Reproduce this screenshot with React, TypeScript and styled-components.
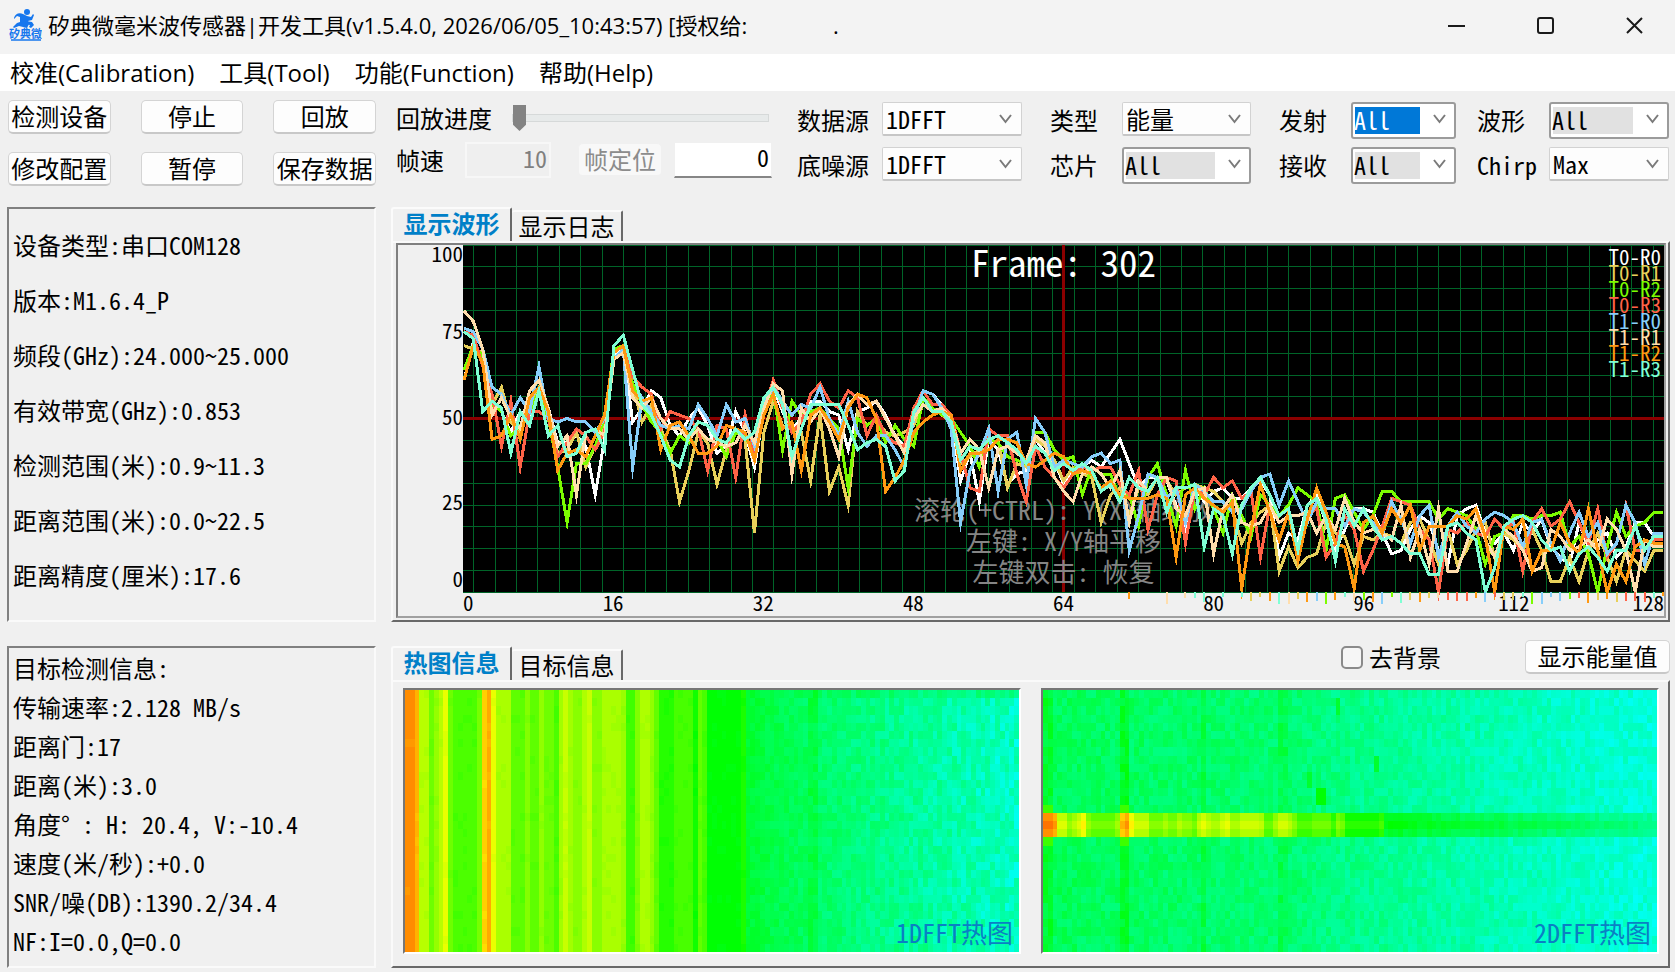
import React, { useState } from 'react';
import styled, { createGlobalStyle, css } from 'styled-components';

const mono = `'Noto Sans Mono CJK SC', 'Noto Sans CJK SC', sans-serif`;
const ui = `'Open Sans', 'Noto Sans CJK SC', sans-serif`;

const GlobalStyle = createGlobalStyle`
  * { box-sizing: border-box; }
  body { margin: 0; background: #f0f0f0; color: #000; font: 24px/32px ${mono}; }
  button, input, select { font: inherit; color: inherit; margin: 0; }
`;

const Window = styled.div`
  display: flex;
  flex-direction: column;
  min-width: 1280px;
  min-height: 100vh;
`;

/* ---------- title bar and menu ---------- */

const TitleBar = styled.header`
  display: flex;
  align-items: center;
  height: 54px;
  padding: 0 32px 4px 9px;
  background: #f3f3f3;
  font: 22px/32px ${ui};
`;

const Title = styled.h1`
  flex: 1;
  margin: 0 0 0 6px;
  font: inherit;
  white-space: pre;
`;

const Logo = styled.svg`
  width: 33px;
  height: 34px;
`;

const WindowButtons = styled.div`
  display: flex;
  gap: 72px;
`;

const WindowButton = styled.button`
  width: 17px;
  height: 17px;
  padding: 0;
  border: 0;
  background: none;
  svg { display: block; width: 17px; height: 17px; fill: none; stroke: #1a1a1a; stroke-width: 2; }
`;

const MenuBar = styled.nav`
  display: flex;
  gap: 25px;
  height: 37px;
  padding: 0 10px;
  background: #fff;
  font: 24px/35px ${ui};
`;

const MenuItem = styled.button`
  padding: 0;
  border: 0;
  background: none;
  white-space: nowrap;
`;

/* ---------- toolbar ---------- */

const Toolbar = styled.section`
  display: flex;
  gap: 20px;
  height: 115px;
  padding: 9px 6px 0 8px;
`;

const ButtonGrid = styled.div`
  display: grid;
  grid-template-columns: repeat(3, 1fr);
  grid-auto-rows: 34px;
  gap: 18px 30px;
  width: 368px;
`;

const PushButton = styled.button<{ $width?: number }>`
  width: ${p => (p.$width ? `${p.$width}px` : '100%')};
  height: 34px;
  padding: 0;
  border: 1px solid #d4d4d4;
  border-bottom: 2px solid #c8c8c8;
  border-radius: 5px;
  background: #fdfdfd;
  line-height: 28px;
  padding-bottom: 2px;
  white-space: nowrap;
  &:disabled { border-color: #f0f0f0; background: #f8f8f8; color: #8c8c8c; }
`;

const Playback = styled.div`
  display: flex;
  flex-direction: column;
  gap: 8px;
  width: 376px;
  padding-top: 1px;
`;

const PlayRow = styled.div`
  display: flex;
  align-items: center;
  height: 34px;
`;

const PlayLabel = styled.label<{ $width: number }>`
  width: ${p => p.$width}px;
`;

const Slider = styled.input`
  flex: 1;
  height: 28px;
  padding-right: 3px;
  appearance: none;
  background: none;
  &::-webkit-slider-runnable-track {
    height: 8px;
    border: 1px solid #d6d9d9;
    background: #e7eaea;
  }
  &::-webkit-slider-thumb {
    appearance: none;
    width: 13px;
    height: 26px;
    margin-top: -10px;
    background: #838383;
    clip-path: polygon(0 0, 100% 0, 100% 76%, 50% 100%, 0 76%);
  }
`;

const NumberBox = styled.input<{ $width: number }>`
  width: ${p => p.$width}px;
  height: 36px;
  padding: 0 2px 6px;
  border: 1px solid #f0f0f0;
  border-bottom: 2px solid #868686;
  background: #fff;
  text-align: right;
  &:disabled { border: 2px solid #f7f7f7; background: #efefef; color: #7f7f7f; }
`;

const SeekGroup = styled.div`
  display: flex;
  flex: 1;
  align-items: center;
  justify-content: space-between;
  margin-left: 27px;
`;

const Sources = styled.div`
  display: flex;
  flex: 1;
  justify-content: space-between;
  gap: 12px;
  padding: 2px 0 0 5px;
`;

const SourceGroup = styled.div<{ $label: number; $field: number; $gap: number; $align: string }>`
  display: grid;
  grid-template-columns: ${p => p.$label}px ${p => p.$field}px;
  grid-auto-rows: 37px;
  gap: 8px ${p => p.$gap}px;
  label { text-align: ${p => p.$align}; line-height: 35px; white-space: nowrap; }
`;

const SelectBox = styled.div<{ $raised: boolean }>`
  position: relative;
  height: ${p => (p.$raised ? 37 : 34)}px;
  svg {
    position: absolute;
    right: 10px;
    top: 11px;
    width: 13px;
    height: 12px;
    fill: none;
    stroke: #7a7a7a;
    stroke-width: 2;
    pointer-events: none;
  }
`;

const Select = styled.select<{ $mode: 'plain' | 'checked' | 'active' }>`
  display: block;
  width: 100%;
  height: 100%;
  padding: 0 28px 2px 3px;
  appearance: none;
  outline: none;
  border: 1px solid #d2d2d2;
  border-bottom: 2px solid #c6c6c6;
  border-radius: 2px;
  background: #fdfdfd;
  ${p => p.$mode !== 'plain' && css`
    padding-left: 1px;
    border: 2px solid #9b9b9b;
    border-radius: 3px;
    background: linear-gradient(#e1e1e1, #e1e1e1) 2px 3px / calc(100% - 36px) calc(100% - 6px) no-repeat #fff;
  `}
  ${p => p.$mode === 'active' && css`
    color: #fff;
    background-image: linear-gradient(#0078d7, #0078d7);
  `}
`;

/* ---------- body ---------- */

const Body = styled.main`
  display: grid;
  grid-template-columns: 369px minmax(0, 1fr);
  grid-template-rows: 415px minmax(322px, 1fr);
  flex: 1;
  gap: 24px 15px;
  padding: 1px 5px 4px 7px;
`;

const InfoPanel = styled.section<{ $line: number; $pad: number }>`
  padding: ${p => p.$pad}px 4px 0;
  border: 2px solid;
  border-color: #808080 #fafafa #fafafa #808080;
  line-height: ${p => p.$line}px;
  p { margin: 0; white-space: pre; }
`;

const TabGroup = styled.section`
  display: flex;
  flex-direction: column;
`;

const TabStrip = styled.div`
  display: flex;
  align-items: flex-end;
  height: 34px;
`;

const Tab = styled.button<{ $active: boolean }>`
  position: relative;
  z-index: 1;
  width: ${p => (p.$active ? 121 : 111)}px;
  height: ${p => (p.$active ? 34 : 31)}px;
  padding: 0 0 ${p => (p.$active ? 6 : 2)}px;
  border: 2px solid;
  border-color: #fbfbfb #696969 transparent #fbfbfb;
  border-left-width: ${p => (p.$active ? 2 : 0)}px;
  border-bottom: 0;
  border-radius: 3px 2px 0 0;
  background: #f0f0f0;
  color: ${p => (p.$active ? '#0080c8' : '#000')};
  font-weight: ${p => (p.$active ? 700 : 400)};
  line-height: 28px;
  white-space: nowrap;
`;

const StripTools = styled.div`
  display: flex;
  align-items: center;
  align-self: flex-start;
  gap: 84px;
  margin: -6px 0 0 auto;
`;

const CheckLabel = styled.label`
  display: flex;
  align-items: center;
  gap: 6px;
`;

const CheckBox = styled.input`
  width: 22px;
  height: 23px;
  appearance: none;
  border: 2px solid #8a8a8a;
  border-radius: 5px;
  background: #f6f6f6;
`;

const TabPanel = styled.div<{ $pad: string }>`
  display: flex;
  flex: 1;
  gap: 20px;
  min-height: 0;
  padding: ${p => p.$pad};
  border: 2px solid;
  border-color: #fafafa #696969 #696969 #fafafa;
`;

/* ---------- waveform chart ---------- */

const ChartFrame = styled.div`
  display: grid;
  grid-template-columns: 65px minmax(0, 1fr);
  grid-template-rows: minmax(0, 1fr) 24px;
  flex: 1;
  border: 2px solid #808080;
  border-color: #808080 #a0a0a0 #a0a0a0 #808080;
  font-size: 21px;
`;

const YAxis = styled.div`
  display: grid;
  grid-template-rows: 1fr 2fr 2fr 2fr 1fr;
  align-items: center;
  padding-bottom: 6px;
  text-align: right;
  line-height: 16px;
  span:first-child { align-self: start; }
  span:last-child { align-self: end; }
`;

const XAxis = styled.div`
  display: grid;
  grid-column: 2;
  grid-template-columns: 1fr repeat(7, 2fr) 1fr;
  height: 22px;
  text-align: center;
  line-height: 20px;
  span:first-child { text-align: left; }
  span:last-child { text-align: right; }
`;

const Plot = styled.div`
  position: relative;
  min-height: 240px;
  background: #000;
`;

const PlotLayer = styled.svg`
  position: absolute;
  inset: 0;
  width: 100%;
  height: 100%;
  overflow: visible;
`;

const FrameCaption = styled.div`
  position: absolute;
  top: 0;
  left: 0;
  right: 0;
  color: #fff;
  font-size: 37px;
  line-height: 32px;
  text-align: center;
  white-space: pre;
`;

const Hints = styled.div`
  position: absolute;
  bottom: 6px;
  left: 0;
  right: 0;
  color: #858585;
  font-size: 26px;
  line-height: 31px;
  text-align: center;
  white-space: pre;
  p { margin: 0; }
`;

const Legend = styled.ul`
  position: absolute;
  top: 3px;
  right: 3px;
  margin: 0;
  padding: 0;
  list-style: none;
  font-size: 21px;
  line-height: 16px;
`;

const LegendItem = styled.li<{ $color: string }>`
  color: ${p => p.$color};
`;

/* ---------- heat maps ---------- */

const HeatFrame = styled.figure`
  position: relative;
  flex: 1;
  min-width: 0;
  margin: 0;
  border: 2px solid;
  border-color: #767676 #fff #fff #767676;
`;

const HeatImage = styled.svg`
  position: absolute;
  inset: 0;
  width: 100%;
  height: 100%;
`;

const HeatCaption = styled.figcaption`
  position: absolute;
  right: 6px;
  bottom: 4px;
  color: #0a7fc4;
  font-size: 26px;
`;

/* ---------- data ---------- */

const series = [
  { name: 'T0-R0', color: '#ffffff', values: [61,72,66,54,52,46,52,50,58,53,43,43,45,42,28,44,68,70,49,53,58,56,48,45,50,53,48,40,42,52,46,36,52,59,52,47,50,55,55,52,51,41,52,53,55,51,45,42,50,58,57,54,51,32,40,26,44,41,31,34,35,44,40,38,31,36,36,38,36,40,44,37,30,33,33,32,25,18,30,26,29,30,27,27,30,32,28,10,17,15,25,28,20,12,18,24,24,23,17,11,12,18,22,20,12,8,22,24,25,17,14,17,12,20,17,21,13,10,8,20,13,15,17,10,13,20,20,16,16] },
  { name: 'T0-R1', color: '#e8d05a', values: [71,70,69,54,59,49,46,55,59,52,40,41,46,36,42,48,67,70,60,49,54,47,41,26,35,46,43,31,41,47,44,17,46,55,48,47,46,32,51,29,36,25,52,48,50,46,45,46,48,54,53,51,49,37,39,41,41,44,30,37,36,44,42,38,32,36,34,33,20,28,30,22,30,28,33,32,28,30,31,30,29,26,24,14,20,23,25,6,13,7,10,11,20,17,16,8,16,15,17,16,14,20,21,15,8,18,8,12,18,20,10,17,15,12,18,12,3,3,10,3,12,17,10,3,12,9,6,12,12] },
  { name: 'T0-R2', color: '#7cfc00', values: [64,71,68,54,52,45,48,52,58,50,36,20,37,37,42,50,70,71,60,54,49,46,40,45,43,49,48,44,39,46,45,40,52,58,41,55,51,52,53,50,47,30,50,48,50,43,48,44,42,56,53,51,50,46,42,36,44,43,39,38,37,46,46,41,38,39,28,36,34,34,27,28,19,33,37,28,19,35,24,30,24,17,28,22,16,28,25,22,25,30,28,26,12,27,28,23,18,22,29,29,26,26,26,26,21,24,23,22,18,8,16,17,22,22,21,22,22,23,13,16,11,0,13,23,16,19,20,23,23] },
  { name: 'T0-R3', color: '#ff6347', values: [75,74,65,57,42,55,36,52,52,50,39,43,47,45,41,46,69,71,62,59,57,47,52,51,50,47,35,48,47,33,51,40,52,61,53,46,49,57,60,55,53,58,56,45,51,45,43,42,53,58,54,54,51,40,30,29,47,45,45,34,26,42,36,33,30,34,36,35,36,36,31,28,35,18,28,33,32,14,30,28,33,30,32,27,29,10,25,20,22,12,22,24,10,14,22,18,6,12,19,27,26,25,18,15,0,18,17,20,17,16,21,18,20,6,20,24,19,21,26,20,14,24,10,14,25,12,12,15,15] },
  { name: 'T1-R0', color: '#87cefa', values: [76,75,70,59,57,51,56,52,65,50,49,50,49,49,46,50,67,70,36,56,52,48,47,48,47,54,50,45,54,49,50,42,54,59,55,51,54,53,59,50,45,55,46,42,45,45,41,36,50,58,57,53,47,20,35,40,47,29,44,46,31,50,46,36,38,37,36,39,40,37,38,12,22,34,33,27,30,20,31,29,26,26,23,24,29,33,34,25,32,26,20,26,24,24,19,24,23,20,16,26,21,14,22,25,10,19,23,19,17,21,23,22,20,13,20,21,14,9,17,23,16,20,11,14,25,20,8,17,17] },
  { name: 'T1-R1', color: '#ffdead', values: [81,78,70,51,56,50,47,58,61,53,42,45,28,46,47,45,67,69,56,53,56,50,47,47,44,47,44,43,42,43,48,43,53,60,58,34,53,49,53,47,39,54,57,54,55,50,45,40,50,54,52,53,50,40,44,41,30,41,42,40,38,45,43,33,29,26,34,36,34,30,35,20,32,29,33,33,24,22,29,30,11,24,28,20,19,20,25,20,22,22,23,17,22,18,27,20,17,18,17,15,25,10,18,8,24,6,6,14,22,15,10,18,16,12,6,7,18,16,12,13,15,12,21,18,12,0,15,13,13] },
  { name: 'T1-R2', color: '#ff9912', values: [61,71,66,44,45,51,44,56,59,52,35,40,41,39,45,51,69,71,58,55,56,41,48,49,45,40,40,42,48,47,46,38,51,57,47,49,35,51,53,49,44,53,57,56,50,29,33,38,46,49,51,52,51,35,40,40,41,44,44,43,37,36,38,40,39,34,35,34,30,32,28,27,27,27,28,27,10,28,30,27,25,23,26,1,18,31,23,15,23,9,21,30,23,14,13,1,20,22,17,24,20,25,12,19,19,19,22,21,24,16,0,19,18,21,6,12,12,20,14,11,24,12,0,8,3,13,15,14,14] },
  { name: 'T1-R3', color: '#7fffd4', values: [75,73,52,55,53,40,52,48,58,45,48,39,40,46,47,41,71,74,64,54,51,45,38,36,45,49,48,44,43,47,44,46,56,59,54,39,47,54,54,54,54,48,41,43,44,42,32,35,52,56,52,52,49,38,42,41,44,45,43,41,37,42,40,35,37,35,37,35,29,31,26,33,30,29,33,23,30,30,31,13,24,22,11,25,30,33,28,22,24,12,25,27,21,9,24,19,24,19,15,16,14,11,11,5,5,19,20,17,15,0,7,19,21,22,20,15,12,13,6,11,13,10,6,12,12,19,12,16,16] },
];

const PLOT_W = 1201;
const PLOT_H = 347;
const STEP = 9.37;
const xAt = (i: number) => 1 + i * STEP;
const yAt = (v: number) => PLOT_H * (1 - v / 100);

/** Repeatable noise in the range 0..1. */
const noise = (a: number, b: number) => {
  const n = Math.sin(a * 127.1 + b * 311.7) * 43758.5453;
  return n - Math.floor(n);
};

const COLS = 128;
const ROWS = 32;

/** Run lengths and hues of the strong range gates, followed by the far field. */
const nearRuns: [number, number][] = [
  [2, 33], [1, 42], [2, 77], [1, 94], [1, 85], [1, 77], [1, 65], [1, 94], [5, 102], [1, 92], [1, 49], [1, 40],
  [1, 65], [3, 80], [3, 98], [1, 89], [2, 98], [1, 86], [2, 94], [1, 102], [1, 82], [1, 73], [1, 82], [2, 88],
  [1, 79], [1, 73], [2, 88], [4, 80], [1, 84], [2, 105], [1, 90], [2, 79], [1, 86], [1, 97], [3, 111], [4, 103],
  [1, 116], [1, 97], [1, 103], [7, 121], [1, 114],
];
const nearHues = nearRuns.flatMap(([n, h]) => Array<number>(n).fill(h));

const rangeHue = (c: number, r: number) => {
  if (c < nearHues.length) return nearHues[c] + (noise(c, r) > 0.86 ? 3 : 0);
  const t = (c - nearHues.length) / (COLS - nearHues.length);
  const base = 131 + 36 * Math.pow(t, 0.75);
  const dip = c === 84 || c === 85 ? -7 : 0;
  return base + dip + (noise(c, r) - 0.5) * (9 + 13 * t) - (r === 0 ? 12 * t : 0);
};

const dopplerHue = (c: number, r: number) => {
  const t = c / COLS;
  const n = noise(c + 50, r + 9);
  if (r >= 15 && r <= 17) {
    const edge = r === 16 ? 0 : 7;
    if (c < nearHues.length) return nearHues[c] * 0.94 + edge - 4;
    return 123 + 27 * ((c - 71) / 57) + edge + (n - 0.5) * 9;
  }
  if ((r === 14 || r === 18) && (c < 2 || c === 16 || c === 17)) return 106;
  if (c >= 57 && c <= 58 && r >= 12 && r <= 13) return 121;
  if ((c === 55 && (r === 10 || r === 11)) || (c === 69 && (r === 8 || r === 9)) || (c === 61 && r > 0 && r < 3)) return 131;
  let base = t < 0.42 ? 141 + 6 * (t / 0.42) : 147 + 25 * Math.pow((t - 0.42) / 0.58, 0.8);
  if (c < 2) base = 131;
  if (c === 16 || c === 17) base = 128 + Math.abs(r - 16) / 5;
  if (c === 33 || c === 49 || c === 50) base -= 8;
  return base + (n - 0.5) * 14;
};

/** Collects the cells of one colour in a single path. */
const buildHeat = (hue: (c: number, r: number) => number) => {
  const paths = new Map<number, string>();
  for (let r = 0; r < ROWS; r++) {
    for (let c = 0; c < COLS; c++) {
      const h = Math.round(hue(c, r));
      paths.set(h, `${paths.get(h) ?? ''}M${c} ${r}h1v1h-1z`);
    }
  }
  return [...paths];
};

const heatMaps = [
  { caption: '1DFFT热图', paths: buildHeat(rangeHue) },
  { caption: '2DFFT热图', paths: buildHeat(dopplerHue) },
];

const deviceInfo = [
  '设备类型:串口COM128', '版本:M1.6.4_P', '频段(GHz):24.000~25.000', '有效带宽(GHz):0.853',
  '检测范围(米):0.9~11.3', '距离范围(米):0.0~22.5', '距离精度(厘米):17.6',
];

const targetInfo = [
  '目标检测信息:', '传输速率:2.128 MB/s', '距离门:17', '距离(米):3.0', '角度° : H: 20.4, V:-10.4',
  '速度(米/秒):+0.0', 'SNR/噪(DB):1390.2/34.4', 'NF:I=0.0,Q=0.0',
];

type Field = { id: string; label: string; value: string; mode: 'plain' | 'checked' | 'active' };
const sourceGroups: { label: number; field: number; gap: number; align: string; fields: Field[] }[] = [
  { label: 72, field: 140, gap: 13, align: 'left', fields: [
    { id: 'data', label: '数据源', value: '1DFFT', mode: 'plain' },
    { id: 'noise', label: '底噪源', value: '1DFFT', mode: 'plain' } ] },
  { label: 55, field: 129, gap: 24, align: 'right', fields: [
    { id: 'type', label: '类型', value: '能量', mode: 'plain' },
    { id: 'chip', label: '芯片', value: 'All', mode: 'checked' } ] },
  { label: 55, field: 105, gap: 24, align: 'right', fields: [
    { id: 'tx', label: '发射', value: 'All', mode: 'active' },
    { id: 'rx', label: '接收', value: 'All', mode: 'checked' } ] },
  { label: 60, field: 120, gap: 12, align: 'left', fields: [
    { id: 'wave', label: '波形', value: 'All', mode: 'checked' },
    { id: 'chirp', label: 'Chirp', value: 'Max', mode: 'plain' } ] },
];

/* ---------- parts ---------- */

const AppLogo = () => (
  <Logo viewBox="0 0 33 34" aria-hidden="true">
    <g fill="#1677ee">
      <circle cx="18" cy="4" r="3" />
      <path d="M5 10c1-4 5-6 9-4l4 2 4 1 2-3 1 1-2 5-4 1 1 3-2 4-4-1-4-1-5 2-1-1 4-4 3-1v-5l-3-1-3 3z" />
      <path d="M17 13l6 1 2 3-3 3-2-1 1-2-5-1z" />
      <rect x="2" y="31" width="30" height="2" opacity=".75" />
    </g>
    <text x="0" y="30" fontSize="11" fontWeight="700" fill="#1677ee" fontFamily="Noto Sans CJK SC">矽典微</text>
  </Logo>
);

const ComboBox = ({ field }: { field: Field }) => (
  <>
    <label htmlFor={field.id}>{field.label}</label>
    <SelectBox $raised={field.mode !== 'plain'}>
      <Select id={field.id} $mode={field.mode} defaultValue={field.value}>
        <option>{field.value}</option>
      </Select>
      <svg viewBox="0 0 13 12"><path d="M1 2l5.500 7L12 2" /></svg>
    </SelectBox>
  </>
);

const Tabs = ({ names, children }: { names: string[]; children?: React.ReactNode }) => {
  const [active, setActive] = useState(0);
  return (
    <TabStrip role="tablist">
      {names.map((name, i) => (
        <Tab key={name} role="tab" aria-selected={i === active} $active={i === active} onClick={() => setActive(i)}>
          {name}
        </Tab>
      ))}
      {children}
    </TabStrip>
  );
};

const columns = Array.from({ length: 56 }, (_, k) => PLOT_W / 2 + (k - 27.5) * 21.45);
const rows = Array.from({ length: 17 }, (_, k) => (k * PLOT_H) / 16);
const ticks = Array.from({ length: 59 }, (_, k) => k + 70).filter(i => i > 82 || noise(i, 3) > 0.5);

const Waveform = () => (
  <ChartFrame>
    <YAxis>{[100, 75, 50, 25, 0].map(v => <span key={v}>{v}</span>)}</YAxis>
    <Plot>
      <PlotLayer viewBox={`0 0 ${PLOT_W} ${PLOT_H}`} preserveAspectRatio="none" shapeRendering="crispEdges">
        <g stroke="#006428" strokeWidth="1">
          {columns.map(x => <line key={x} x1={x} x2={x} y1="0" y2={PLOT_H} />)}
          {rows.map(y => <line key={y} x1="0" x2={PLOT_W} y1={y} y2={y} />)}
        </g>
        <path d={`M0 ${PLOT_H / 2}H${PLOT_W}M${PLOT_W / 2} 0V${PLOT_H}`} stroke="#8b0000" strokeWidth="3.500" />
      </PlotLayer>
      <FrameCaption>Frame: 302</FrameCaption>
      <Hints>
        <p>滚轮(+CTRL): Y(X)轴缩放</p>
        <p>左键: X/Y轴平移</p>
        <p>左键双击: 恢复</p>
      </Hints>
      <PlotLayer viewBox={`0 0 ${PLOT_W} ${PLOT_H}`} preserveAspectRatio="none" fill="none" shapeRendering="crispEdges">
        {series.map(s => (
          <polyline key={s.name} stroke={s.color} strokeWidth="3" strokeMiterlimit="10"
            points={s.values.map((v, i) => `${xAt(i)},${yAt(v)}`).join(' ')} />
        ))}
        {ticks.map(i => (
          <line key={i} x1={xAt(i)} x2={xAt(i)} y1={PLOT_H} y2={PLOT_H + 4 + noise(i, 7) * 8}
            stroke={series[1 + Math.floor(noise(i, 1) * 7)].color} strokeWidth="2" />
        ))}
      </PlotLayer>
      <Legend>
        {series.map(s => <LegendItem key={s.name} $color={s.color}>{s.name}</LegendItem>)}
      </Legend>
    </Plot>
    <XAxis>{[0, 16, 32, 48, 64, 80, 96, 112, 128].map(v => <span key={v}>{v}</span>)}</XAxis>
  </ChartFrame>
);

export default function App() {
  return (
    <Window>
      <GlobalStyle />
      <TitleBar>
        <AppLogo />
        <Title>矽典微毫米波传感器|开发工具(v1.5.4.0, 2026/06/05_10:43:57) [授权给:               .</Title>
        <WindowButtons>
          <WindowButton aria-label="最小化"><svg viewBox="0 0 17 17"><path d="M0 9h17" /></svg></WindowButton>
          <WindowButton aria-label="最大化"><svg viewBox="0 0 17 17"><rect x="1" y="1" width="15" height="15" rx="2" /></svg></WindowButton>
          <WindowButton aria-label="关闭"><svg viewBox="0 0 17 17"><path d="M1 1l15 15M16 1L1 16" /></svg></WindowButton>
        </WindowButtons>
      </TitleBar>
      <MenuBar>
        {['校准(Calibration)', '工具(Tool)', '功能(Function)', '帮助(Help)'].map(m => <MenuItem key={m}>{m}</MenuItem>)}
      </MenuBar>

      <Toolbar>
        <ButtonGrid>
          {['检测设备', '停止', '回放', '修改配置', '暂停', '保存数据'].map(b => <PushButton key={b}>{b}</PushButton>)}
        </ButtonGrid>
        <Playback>
          <PlayRow>
            <PlayLabel htmlFor="progress" $width={116}>回放进度</PlayLabel>
            <Slider id="progress" type="range" min="0" max="100" defaultValue="0" />
          </PlayRow>
          <PlayRow>
            <PlayLabel htmlFor="rate" $width={69}>帧速</PlayLabel>
            <NumberBox id="rate" $width={86} defaultValue="10" disabled />
            <SeekGroup>
              <PushButton $width={84} disabled>帧定位</PushButton>
              <NumberBox aria-label="帧定位" $width={98} defaultValue="0" />
            </SeekGroup>
          </PlayRow>
        </Playback>
        <Sources>
          {sourceGroups.map(g => (
            <SourceGroup key={g.fields[0].id} $label={g.label} $field={g.field} $gap={g.gap} $align={g.align}>
              {g.fields.map(f => <ComboBox key={f.id} field={f} />)}
            </SourceGroup>
          ))}
        </Sources>
      </Toolbar>

      <Body>
        <InfoPanel $line={55} $pad={8}>
          {deviceInfo.map(t => <p key={t}>{t}</p>)}
        </InfoPanel>
        <TabGroup>
          <Tabs names={['显示波形', '显示日志']} />
          <TabPanel $pad="0 2px 2px 3px"><Waveform /></TabPanel>
        </TabGroup>
        <InfoPanel $line={39} $pad={0}>
          {targetInfo.map(t => <p key={t}>{t}</p>)}
        </InfoPanel>
        <TabGroup>
          <Tabs names={['热图信息', '目标信息']}>
            <StripTools>
              <CheckLabel><CheckBox type="checkbox" />去背景</CheckLabel>
              <PushButton $width={145}>显示能量值</PushButton>
            </StripTools>
          </Tabs>
          <TabPanel $pad="6px 9px 12px 10px">
            {heatMaps.map(m => (
              <HeatFrame key={m.caption}>
                <HeatImage viewBox={`0 0 ${COLS} ${ROWS}`} preserveAspectRatio="none" shapeRendering="crispEdges">
                  {m.paths.map(([h, d]) => <path key={h} d={d} fill={`hsl(${h} 100% 50%)`} />)}
                </HeatImage>
                <HeatCaption>{m.caption}</HeatCaption>
              </HeatFrame>
            ))}
          </TabPanel>
        </TabGroup>
      </Body>
    </Window>
  );
}
